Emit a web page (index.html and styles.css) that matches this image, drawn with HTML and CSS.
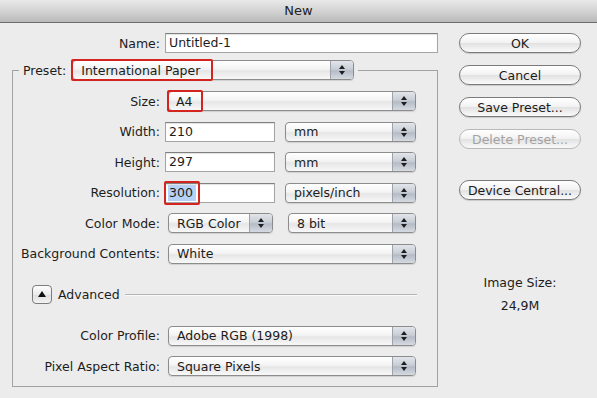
FILE: index.html
```html
<!DOCTYPE html>
<html lang="en">
<head>
    <meta charset="UTF-8">
    <meta name="viewport" content="width=device-width, initial-scale=1.0">
    <title>New</title>
    <link rel="stylesheet" href="styles.css">
</head>
<body>
    <div class="titlebar">New</div>

    <div class="dialog">
        <div class="main">
            <div class="row name-row">
                <label class="lbl">Name:</label>
                <div class="field field-name">Untitled-1</div>
            </div>

            <fieldset class="group">
                <legend class="preset">
                    <span class="preset-lbl">Preset:</span>
                    <div class="popup popup-preset">
                        <span class="value hl hl-preset">International Paper</span>
                        <span class="stepper"></span>
                    </div>
                </legend>

                <div class="rows">
                    <div class="row">
                        <label class="lbl">Size:</label>
                        <div class="popup popup-full">
                            <span class="value hl hl-size">A4</span>
                            <span class="stepper"></span>
                        </div>
                    </div>
                    <div class="row">
                        <label class="lbl">Width:</label>
                        <div class="field field-num">210</div>
                        <div class="popup popup-unit">
                            <span class="value">mm</span>
                            <span class="stepper"></span>
                        </div>
                    </div>
                    <div class="row">
                        <label class="lbl">Height:</label>
                        <div class="field field-num">297</div>
                        <div class="popup popup-unit">
                            <span class="value">mm</span>
                            <span class="stepper"></span>
                        </div>
                    </div>
                    <div class="row">
                        <label class="lbl">Resolution:</label>
                        <div class="field field-num field-hl"><span class="sel">300</span><span class="hl-res"></span></div>
                        <div class="popup popup-unit">
                            <span class="value">pixels/inch</span>
                            <span class="stepper"></span>
                        </div>
                    </div>
                    <div class="row">
                        <label class="lbl">Color Mode:</label>
                        <div class="popup popup-mode">
                            <span class="value">RGB Color</span>
                            <span class="stepper"></span>
                        </div>
                        <div class="popup popup-bit">
                            <span class="value">8 bit</span>
                            <span class="stepper"></span>
                        </div>
                    </div>
                    <div class="row">
                        <label class="lbl">Background Contents:</label>
                        <div class="popup popup-full">
                            <span class="value">White</span>
                            <span class="stepper"></span>
                        </div>
                    </div>
                </div>

                <div class="advanced">
                    <span class="disclosure"></span>
                    <span class="adv-text">Advanced</span>
                    <span class="adv-line"></span>
                </div>

                <div class="rows rows-adv">
                    <div class="row">
                        <label class="lbl">Color Profile:</label>
                        <div class="popup popup-full">
                            <span class="value">Adobe RGB (1998)</span>
                            <span class="stepper"></span>
                        </div>
                    </div>
                    <div class="row">
                        <label class="lbl">Pixel Aspect Ratio:</label>
                        <div class="popup popup-full">
                            <span class="value">Square Pixels</span>
                            <span class="stepper"></span>
                        </div>
                    </div>
                </div>
            </fieldset>
        </div>

        <div class="side">
            <button class="btn">OK</button>
            <button class="btn">Cancel</button>
            <button class="btn">Save Preset...</button>
            <button class="btn" disabled>Delete Preset...</button>
            <button class="btn btn-device">Device Central...</button>

            <div class="image-size">
                <div>Image Size:</div>
                <div class="size-val">24,9M</div>
            </div>
        </div>
    </div>
</body>
</html>
```

FILE: styles.css
```css
body {
    margin: 0;
    background: #ececec;
    font-family: "DejaVu Sans", sans-serif;
    font-size: 12.5px;
    color: #1c1c1c;
    width: 597px;
    height: 398px;
    overflow: hidden;
}
.titlebar {
    height: 22px;
    line-height: 22px;
    text-align: center;
    font-size: 13px;
    color: #222;
    background: linear-gradient(#e9e9e9, #d3d3d3 50%, #bababa);
    border-bottom: 1px solid #6c6c6c;
}
.dialog {
    display: flex;
}
.main {
    width: 433px;
    padding-left: 12px;
}
.row {
    display: flex;
    align-items: center;
    height: 20px;
}
.lbl {
    width: 147px;
    flex-shrink: 0;
    text-align: right;
    margin-right: 5px;
    white-space: nowrap;
}
.name-row {
    margin-top: 10px;
}
.name-row .lbl {
    width: 148px;
}
.field {
    height: 20px;
    box-sizing: border-box;
    background: #fff;
    border: 1px solid #a4a4a4;
    border-top-color: #808080;
    box-shadow: inset 0 1px 1px rgba(0, 0, 0, 0.12);
    padding-left: 3px;
    line-height: 18px;
    white-space: nowrap;
}
.field-name {
    width: 273px;
}
.field-num {
    width: 110px;
}
.field-hl {
    position: relative;
    padding-left: 2px;
}
.sel {
    background: #b5d2f6;
    display: inline-block;
    padding: 0 3px 0 1px;
    line-height: 16px;
}
/* red annotation box drawn over the resolution value */
.hl-res {
    position: absolute;
    left: -2px;
    top: -3px;
    width: 32px;
    height: 20px;
    border: 2px solid #d42420;
    border-radius: 2px;
}
.group {
    margin: 7px 0 0 0;
    padding: 0 0 10px 0;
    width: 424px;
    border: 1px solid #a2a2a2;
    border-radius: 0;
}
.preset {
    display: flex;
    align-items: center;
    margin-left: 6px;
    padding: 0 4px;
    height: 20px;
}
.preset-lbl {
    margin-right: 6px;
}
.rows {
    display: flex;
    flex-direction: column;
    gap: 10.5px;
    margin-top: 11px;
}
.rows-adv {
    margin-top: 21px;
}
.popup {
    display: flex;
    align-items: stretch;
    height: 20px;
    box-sizing: border-box;
    border: 1px solid #8c8c8c;
    border-radius: 4px;
    background: linear-gradient(#ffffff, #f4f4f4 45%, #e6e6e6 55%, #f8f8f8);
    box-shadow: 0 1px 1px rgba(0, 0, 0, 0.12);
    margin-left: 3px;
}
.value {
    flex: 1;
    display: flex;
    align-items: center;
    padding-left: 8px;
    white-space: nowrap;
}
.hl {
    flex: none;
    margin: -2px 0 -2px -2px;
    border: 2px solid #d42420;
    border-radius: 2px;
}
.hl-preset {
    width: 130px;
}
.hl-size {
    width: 25px;
    padding-left: 7px;
}
.hl + .stepper {
    margin-left: auto;
}
.stepper {
    width: 22px;
    flex-shrink: 0;
    border-left: 1px solid #9ea3ab;
    border-radius: 0 3px 3px 0;
    background: linear-gradient(#e2e5ea, #c9ced6 45%, #b5bcc7 55%, #d6dae1);
    position: relative;
}
.stepper::before,
.stepper::after {
    content: "";
    position: absolute;
    left: 8px;
    border-left: 3px solid transparent;
    border-right: 3px solid transparent;
}
.stepper::before {
    top: 4px;
    border-bottom: 4px solid #1e1e1e;
}
.stepper::after {
    bottom: 4px;
    border-top: 4px solid #1e1e1e;
}
.popup-preset {
    width: 282px;
    margin-left: 0;
}
.popup-full {
    width: 248px;
}
.popup-unit {
    width: 131px;
    margin-left: 10px;
}
.popup-mode {
    width: 105px;
}
.popup-bit {
    width: 128px;
    margin-left: 15px;
}
.advanced {
    display: flex;
    align-items: center;
    height: 20px;
    margin-top: 21px;
    padding-left: 19px;
}
.disclosure {
    width: 20px;
    height: 19px;
    box-sizing: border-box;
    border: 1px solid #7c7c7c;
    border-radius: 4px;
    background: linear-gradient(#fdfdfd, #ececec 50%, #dedede 51%, #f3f3f3);
    position: relative;
}
.disclosure::after {
    content: "";
    position: absolute;
    left: 5px;
    top: 5px;
    border-left: 4px solid transparent;
    border-right: 4px solid transparent;
    border-bottom: 6px solid #111;
}
.adv-text {
    margin-left: 6px;
}
.adv-line {
    width: 292px;
    margin-left: 5px;
    height: 1px;
    background: #b4b4b4;
    border-bottom: 1px solid #fafafa;
}
.side {
    width: 122px;
    margin-left: 14px;
    display: flex;
    flex-direction: column;
    padding-top: 10px;
}
.btn {
    height: 20px;
    margin-bottom: 12px;
    font-family: inherit;
    font-size: 12.5px;
    color: #1c1c1c;
    border: 1px solid #7a7a7a;
    border-radius: 10px;
    background: linear-gradient(#ffffff, #f2f2f2 48%, #e2e2e2 52%, #fafafa);
    box-shadow: 0 1px 1px rgba(0, 0, 0, 0.15);
    padding: 0;
}
.btn:disabled {
    color: #a3a3a3;
    border-color: #b8b8b8;
    box-shadow: none;
}
.btn-device {
    margin-top: 19px;
}
.image-size {
    text-align: center;
    margin-top: 63px;
    line-height: 16px;
}
.size-val {
    margin-top: 7px;
}
```
